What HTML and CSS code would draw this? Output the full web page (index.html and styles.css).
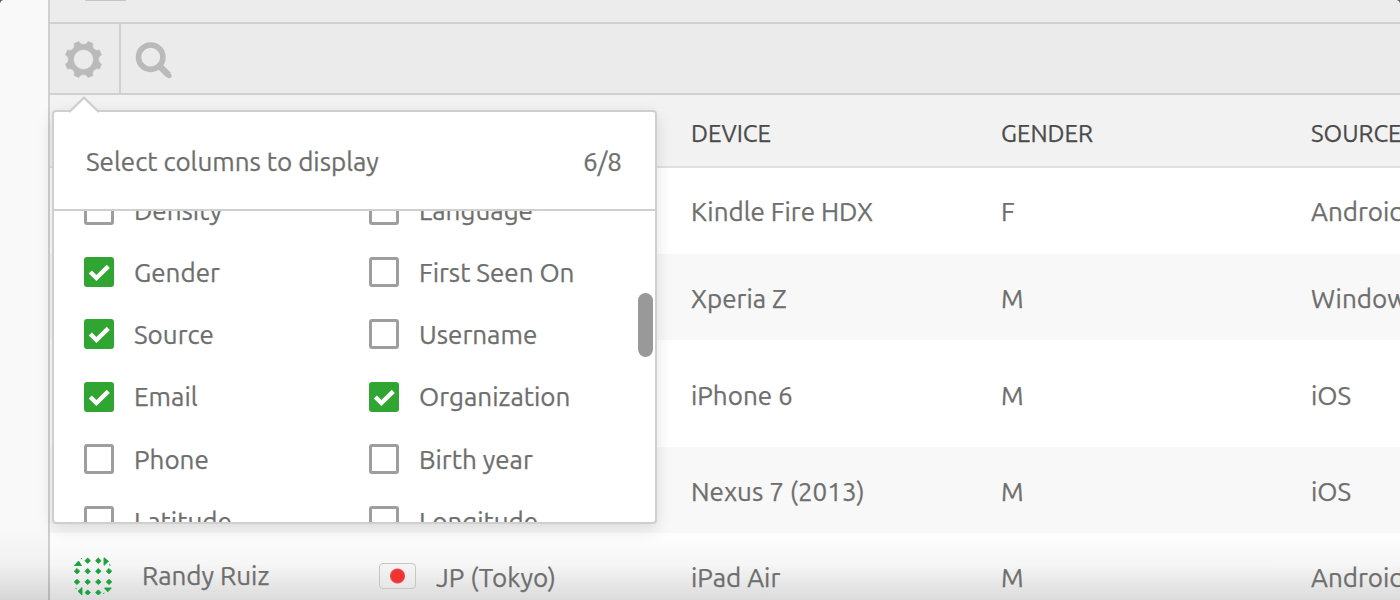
FILE: index.html
```html
<!DOCTYPE html>
<html lang="en">
<head>
<meta charset="utf-8">
<title>People</title>
<link rel="stylesheet" href="styles.css">
</head>
<body>
<svg class="defs" aria-hidden="true">
  <symbol id="check" viewBox="0 0 30 30"><path d="M6.300 15 12.400 21 24.300 9.400" fill="none" stroke="#fff" stroke-width="4.400"/></symbol>
</svg>
<div class="app">
  <aside class="sidebar"></aside>
  <main class="main">
    <div class="topbar"><span class="tab"></span></div>
    <div class="toolbar">
      <button class="tool settings" aria-label="Columns">
        <svg width="40" height="40" viewBox="-20.500 -20.500 40 40"><path fill="#bababa" stroke="#bababa" stroke-width=".6" stroke-linejoin="round" fill-rule="evenodd" d="M-4.500-18A4.900 4.900 0 0 0 4.500-18L9.500-15.950A4.900 4.900 0 0 0 15.950-9.500L18-4.500A4.900 4.900 0 0 0 18 4.500L15.950 9.500A4.900 4.900 0 0 0 9.500 15.950L4.500 18A4.900 4.900 0 0 0-4.500 18L-9.500 15.950A4.900 4.900 0 0 0-15.950 9.500L-18 4.500A4.900 4.900 0 0 0-18-4.500L-15.950-9.500A4.900 4.900 0 0 0-9.500-15.950ZM0-10A10 10 0 1 0 0 10A10 10 0 1 0 0-10Z"/></svg>
      </button>
      <button class="tool search" aria-label="Search">
        <svg width="40" height="40" viewBox="0 0 40 40" fill="none" stroke="#bababa"><circle cx="16.700" cy="17.200" r="12.200" stroke-width="5.600"/><path d="M26.200 26.700 34.600 35.100" stroke-width="6.400"/><path d="M33 33.500 35.200 35.700" stroke-width="5" stroke-linecap="round"/></svg>
      </button>
    </div>
    <div class="table">
      <div class="row head"><span></span><span></span><span>DEVICE</span><span>GENDER</span><span>SOURCE</span></div>
      <div class="row first"><span></span><span></span><span>Kindle Fire HDX</span><span>F</span><span>Android</span></div>
      <div class="row alt"><span></span><span></span><span>Xperia Z</span><span>M</span><span>Windows</span></div>
      <div class="row tall"><span></span><span></span><span>iPhone 6</span><span>M</span><span>iOS</span></div>
      <div class="row alt"><span></span><span></span><span>Nexus 7 (2013)</span><span>M</span><span>iOS</span></div>
      <div class="row last">
        <span class="person">
          <svg width="38" height="38" viewBox="0 0 38 38" fill="#17a43c" stroke="#17a43c" stroke-width=".9"><path d="M13.700 1l2.700 2.700-2.700 2.700L11 3.700zM24.300 1l2.700 2.700-2.700 2.700-2.700-2.700zM3 11.500l2.700 2.700L3 16.900.3 14.200zM13.700 11.500l2.700 2.700-2.700 2.700-2.700-2.700zM24.300 11.500l2.700 2.700-2.700 2.700-2.700-2.700zM35 11.500l2.700 2.700-2.700 2.700-2.700-2.700zM3 22.200l2.700 2.700L3 27.600.3 24.900zM13.700 22.200l2.700 2.700-2.700 2.700-2.700-2.700zM24.300 22.200l2.700 2.700-2.700 2.700-2.700-2.700zM35 22.200l2.700 2.700-2.700 2.700-2.700-2.700zM13.700 32.900l2.700 2.700-2.700 2.400-2.700-2.400zM24.300 32.900l2.700 2.700-2.700 2.400-2.700-2.400zM.5 8.500 4.500 4l3 4.500zM30 .7l4.500 3.600L30 8.300zM30.500 31h6.800l-3.500 3.800zM8 30.500V38l-4-3.700z"/><path stroke="none" d="M6.500 1.500l1.500-.7v1.700zM35.500 6.800l1.500 1.700h-2zM1 31.500l1.500-.7v1.700zM29 36.200l1.500-.7-.7 1.700z"/></svg>
          <span>Randy Ruiz</span>
        </span>
        <span class="place"><i class="flag"></i><span>JP (Tokyo)</span></span>
        <span>iPad Air</span><span>M</span><span>Android</span>
      </div>
    </div>
  </main>
  <section class="popover">
    <svg class="arrow" width="30" height="18" viewBox="0 0 30 18"><path d="M0 16 15 1.600 30 16V18H0Z" fill="#fff"/><path d="M0 16.300 15 1.600 30 16.300" fill="none" stroke="#cfcfcf" stroke-width="2.200"/></svg>
    <header class="pop-head"><span>Select columns to display</span><span>6/8</span></header>
    <div class="pop-list">
      <div class="options">
        <label><i class="box"></i><span>Density</span></label>
        <label><i class="box"></i><span>Language</span></label>
        <label><svg class="box on"><use href="#check"/></svg><span>Gender</span></label>
        <label><i class="box"></i><span>First Seen On</span></label>
        <label><svg class="box on"><use href="#check"/></svg><span>Source</span></label>
        <label><i class="box"></i><span>Username</span></label>
        <label><svg class="box on"><use href="#check"/></svg><span>Email</span></label>
        <label><svg class="box on"><use href="#check"/></svg><span>Organization</span></label>
        <label><i class="box"></i><span>Phone</span></label>
        <label><i class="box"></i><span>Birth year</span></label>
        <label><i class="box"></i><span>Latitude</span></label>
        <label><i class="box"></i><span>Longitude</span></label>
      </div>
      <i class="thumb"></i>
    </div>
  </section>
  <div class="fade"></div>
  <i class="corner left"></i><i class="corner right"></i>
</div>
</body>
</html>
```
FILE: styles.css
```css
* { box-sizing: border-box; }
body { margin: 0; background: #fff; color: #6e6e6e; font: 26px/32px Ubuntu, "Noto Sans", sans-serif; -webkit-text-stroke: .25px; }
.defs { position: absolute; width: 0; height: 0; }
.app { position: relative; display: flex; width: 1400px; height: 600px; overflow: hidden; white-space: nowrap; }
.sidebar { flex: 0 0 50px; background: #f9f9f9; border-right: 2px solid #d0d0d0; }
.main { flex: 1; min-width: 0; }
.topbar { height: 24px; padding-left: 35px; background: #ececec; border-bottom: 2px solid #d0d0d0; }
.tab { display: block; width: 41px; height: 1px; background: #c4c4c4; border-radius: 0 0 4px 4px; }
.toolbar { display: flex; height: 71px; background: #ebebeb; border-bottom: 2px solid #d0d0d0; }
.tool { display: flex; align-items: center; padding: 2px 0 0; border: 0; background: none; }
.settings { width: 71px; padding: 1px 0 0 13px; border-right: 2px solid #d0d0d0; }
.search { padding-left: 13px; }

.row { display: grid; grid-template-columns: 329px 312px 310px 310px 200px; align-items: center; height: 86px; padding-top: 3px; }
.row.head { height: 73px; padding-top: 6px; background: #f2f2f2; border-bottom: 2px solid #e0e0e0; color: #4b4b4b; font-size: 24px; }
.row.first { padding-top: 1px; }
.row.alt { background: #f8f8f8; }
.row.tall { height: 107px; padding-top: 4px; }
.row.last { position: relative; z-index: 1; }
.person { display: flex; align-items: center; gap: 30px; padding: 0 0 4px 24px; }
.place { display: flex; align-items: center; gap: 20px; }
.flag { width: 37px; height: 26px; margin-bottom: 3px; border: 1.500px solid #c6c6c6; border-radius: 4px; background: radial-gradient(circle, #f03434 0 6px, #f0504c 7px, transparent 8px), linear-gradient(#f5f5f5, #e6e6e6); }

.popover { position: absolute; left: 52px; top: 110px; width: 605px; height: 414px; background: #fff; border: 2px solid #cfcfcf; border-radius: 4px; box-shadow: 0 5px 16px rgba(0,0,0,.12); }
.arrow { position: absolute; left: 15px; top: -16px; }
.pop-head { display: flex; justify-content: space-between; align-items: center; height: 99px; padding: 2px 33px 0 32px; border-bottom: 2px solid #cfcfcf; }
.pop-list { position: relative; height: 311px; overflow: hidden; }
.options { display: grid; grid-template-columns: 285px 260px; grid-auto-rows: 62.200px; margin: -32px 0 0 30px; }
.options label { display: flex; align-items: center; gap: 20px; }
.options span { padding-top: 1.500px; }
.box { flex: none; width: 30px; height: 30px; border: 3px solid #9e9e9e; border-radius: 3px; }
.box.on { border: 0; background: #31a532; }
.thumb { position: absolute; right: 2px; top: 82px; width: 15px; height: 64px; border-radius: 8px; background: #999; }

.fade { position: absolute; left: 0; right: 0; bottom: 0; height: 72px; background: linear-gradient(transparent, rgba(0,0,0,.035) 50%, rgba(0,0,0,.14)); pointer-events: none; }
.corner { position: absolute; top: 0; width: 4px; height: 4px; }
.corner.left { left: 0; background: radial-gradient(circle at 4px 4px, transparent 3.500px, #555 4.500px); }
.corner.right { right: 0; background: radial-gradient(circle at 0 4px, transparent 3.500px, #555 4.500px); }
```
